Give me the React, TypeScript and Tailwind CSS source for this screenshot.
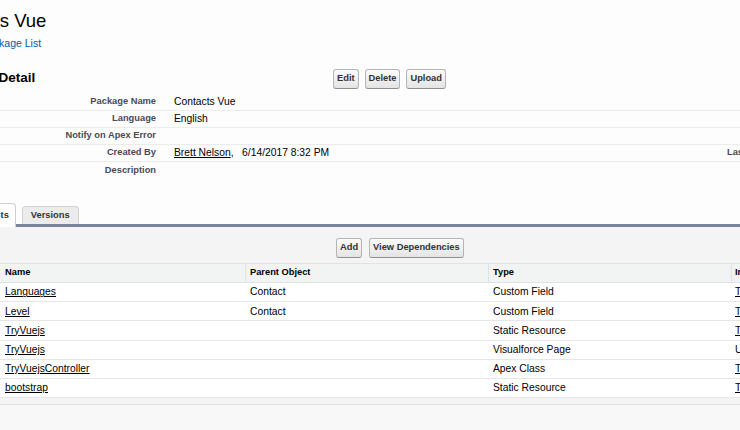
import React from 'react';

const Btn: React.FC<{ label: string }> = ({ label }) => (
  <button className="h-[20px] px-[3px] rounded-[3px] border border-[#b5b5b5] border-b-[#8f8f8f] bg-gradient-to-b from-[#fbfbfb] to-[#e4e4e4] text-[9.3px] font-bold text-[#333] leading-none whitespace-nowrap">
    {label}
  </button>
);

const DETAIL = [
  { label: 'Package Name', value: 'Contacts Vue' },
  { label: 'Language', value: 'English' },
  { label: 'Notify on Apex Error', value: '' },
  { label: 'Created By', value: 'created' },
  { label: 'Description', value: '' },
];

const COMPONENTS = [
  { name: 'Languages', parent: 'Contact', type: 'Custom Field', last: 'T', link: true },
  { name: 'Level', parent: 'Contact', type: 'Custom Field', last: 'T', link: true },
  { name: 'TryVuejs', parent: '', type: 'Static Resource', last: 'T', link: true },
  { name: 'TryVuejs', parent: '', type: 'Visualforce Page', last: 'U', link: false },
  { name: 'TryVuejsController', parent: '', type: 'Apex Class', last: 'T', link: true },
  { name: 'bootstrap', parent: '', type: 'Static Resource', last: 'T', link: true },
];

export default function App() {
  return (
    <div className="w-[740px] h-[430px] overflow-hidden bg-[#fdfdfd] font-['Liberation_Sans',Arial,sans-serif] text-black">
      {/* page title */}
      <div className="pt-[10px]">
        <div className="-ml-[64px] text-[18.5px] leading-[22px] whitespace-nowrap">Contacts Vue</div>
        <div className="-ml-[19px] mt-[5px] text-[10.5px] leading-[12px] text-[#015ba7] whitespace-nowrap">Package List</div>
      </div>

      {/* detail block */}
      <div className="mt-[17px] h-[25px] flex items-center">
        <div className="w-[393px] shrink-0 -ml-[60px] text-[13.5px] font-bold whitespace-nowrap">
          Package Detail
        </div>
        <div className="flex gap-[6px]">
          <Btn label="Edit" />
          <Btn label="Delete" />
          <Btn label="Upload" />
        </div>
      </div>

      <div className="mt-[3px]">
        {DETAIL.map((row, i) => (
          <div
            key={row.label}
            className={`h-[17px] flex items-center overflow-hidden ${i < DETAIL.length - 1 ? 'border-b border-[#ececec]' : ''}`}
          >
            <div className="w-[166px] shrink-0 pr-[10px] text-right text-[9.3px] font-bold text-[#4a4a56] whitespace-nowrap">
              {row.label}
            </div>
            <div className="w-[561px] shrink-0 pl-[8px] text-[10.3px] whitespace-nowrap">
              {row.value === 'created' ? (
                <span>
                  <span className="underline">Brett Nelson</span>,&nbsp;&nbsp; 6/14/2017 8:32 PM
                </span>
              ) : (
                row.value
              )}
            </div>
            {row.value === 'created' && (
              <div className="shrink-0 text-[9.3px] font-bold text-[#4a4a56] whitespace-nowrap">Last Modified By</div>
            )}
          </div>
        ))}
      </div>

      {/* tabs */}
      <div className="mt-[24px] flex items-end gap-[6px] border-b-[3px] border-[#7b8498]">
        <div className="relative shrink-0 -ml-[55px] -mb-[3px] h-[24px] px-[6px] flex items-center bg-white border border-b-0 border-[#cfcfcf] rounded-t-[4px] text-[9.3px] font-bold text-[#333]">
          Components
        </div>
        <div className="shrink-0 h-[18px] px-[8px] flex items-center bg-[#ececec] border border-b-0 border-[#d2d2d2] rounded-t-[4px] text-[9.3px] font-bold text-[#333]">
          Versions
        </div>
      </div>

      {/* related list */}
      <div className="bg-[#f4f4f4] border-b border-[#e2e2e2] pb-[6px]">
        <div className="pt-[11px] pl-[336px] flex gap-[7px]">
          <Btn label="Add" />
          <Btn label="View Dependencies" />
        </div>
        <div className="mt-[5px]">
          <div className="h-[20px] flex items-center overflow-hidden bg-[#f2f3f3] border-y border-[#e0e3e5] text-[9.3px] font-bold">
            <div className="w-[246px] shrink-0 h-full flex items-center pl-[5px] border-r border-[#e0e3e5]">Name</div>
            <div className="w-[243px] shrink-0 h-full flex items-center pl-[4px] border-r border-[#e0e3e5]">Parent Object</div>
            <div className="w-[243px] shrink-0 h-full flex items-center pl-[4px] border-r border-[#e0e3e5]">Type</div>
            <div className="shrink-0 pl-[3px] whitespace-nowrap">Installed</div>
          </div>
          {COMPONENTS.map((c, i) => (
            <div key={i} className="h-[19.2px] flex items-center overflow-hidden bg-white border-b border-[#e6e6e6] text-[10.3px] whitespace-nowrap">
              <div className="w-[246px] shrink-0 pl-[5px]">
                <span className="underline">{c.name}</span>
              </div>
              <div className="w-[243px] shrink-0 pl-[4px]">{c.parent}</div>
              <div className="w-[243px] shrink-0 pl-[4px]">{c.type}</div>
              <div className="shrink-0 pl-[3px]">
                <span className={c.link ? 'underline' : ''}>{c.last === 'T' ? 'TryVuejs' : 'Unmanaged'}</span>
              </div>
            </div>
          ))}
        </div>
      </div>
      <div className="h-[30px] bg-[#f8f8f8]" />
    </div>
  );
}
